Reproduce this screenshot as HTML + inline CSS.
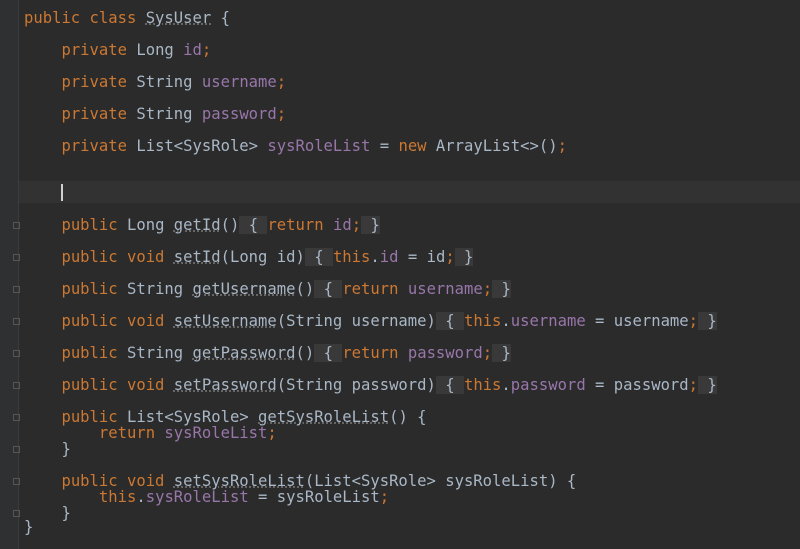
<!DOCTYPE html>
<html><head><style>
body{margin:0;width:800px;height:549px;background:#2b2b2b;overflow:hidden;position:relative;font-family:"DejaVu Sans Mono","Liberation Mono",monospace;font-size:15.55px;color:#a9b7c6}
.g{position:absolute;left:0;top:0;width:18px;height:549px;background:#2f3032;border-right:1px solid #3a3d3f}
.l{position:absolute;left:24px;height:20px;line-height:20px;white-space:pre}
.k{color:#cc7832}.f{color:#9876aa}.u{text-decoration:underline dotted #777}
.fb{background:#393939}
.cur{position:absolute;left:19px;right:0;top:181px;height:22px;background:#323232}
.caret{position:absolute;left:61px;top:184px;width:2px;height:17px;background:#cfcfcf}
.fm{position:absolute;left:13px;width:7px;height:7px;border:1px solid #555;box-sizing:border-box}
</style></head><body>
<div class="g"></div>
<div class="cur"></div><div class="caret"></div>
<div class="fm" style="top:222px"></div><div class="fm" style="top:254px"></div><div class="fm" style="top:286px"></div><div class="fm" style="top:318px"></div><div class="fm" style="top:350px"></div><div class="fm" style="top:382px"></div><div class="fm" style="top:414px"></div><div class="fm" style="top:446px"></div><div class="fm" style="top:478px"></div><div class="fm" style="top:510px"></div>
<div class="l" style="top:8px"><span class="k">public class </span><span class="u">SysUser</span> {</div>
<div class="l" style="top:40px">    <span class="k">private </span>Long <span class="f">id</span><span class="k">;</span></div>
<div class="l" style="top:72px">    <span class="k">private </span>String <span class="f">username</span><span class="k">;</span></div>
<div class="l" style="top:104px">    <span class="k">private </span>String <span class="f">password</span><span class="k">;</span></div>
<div class="l" style="top:136px">    <span class="k">private </span>List&lt;SysRole&gt; <span class="f">sysRoleList</span> = <span class="k">new </span>ArrayList&lt;&gt;()<span class="k">;</span></div>
<div class="l" style="top:215px">    <span class="k">public </span>Long <span class="u">getId</span>()<span class="fb"> { </span><span class="k">return </span><span class="f">id</span><span class="k">;</span><span class="fb"> }</span></div>
<div class="l" style="top:247px">    <span class="k">public void </span><span class="u">setId</span>(Long id)<span class="fb"> { </span><span class="k">this</span>.<span class="f">id</span> = id<span class="k">;</span><span class="fb"> }</span></div>
<div class="l" style="top:279px">    <span class="k">public </span>String <span class="u">getUsername</span>()<span class="fb"> { </span><span class="k">return </span><span class="f">username</span><span class="k">;</span><span class="fb"> }</span></div>
<div class="l" style="top:311px">    <span class="k">public void </span><span class="u">setUsername</span>(String username)<span class="fb"> { </span><span class="k">this</span>.<span class="f">username</span> = username<span class="k">;</span><span class="fb"> }</span></div>
<div class="l" style="top:343px">    <span class="k">public </span>String <span class="u">getPassword</span>()<span class="fb"> { </span><span class="k">return </span><span class="f">password</span><span class="k">;</span><span class="fb"> }</span></div>
<div class="l" style="top:375px">    <span class="k">public void </span><span class="u">setPassword</span>(String password)<span class="fb"> { </span><span class="k">this</span>.<span class="f">password</span> = password<span class="k">;</span><span class="fb"> }</span></div>
<div class="l" style="top:407px">    <span class="k">public </span>List&lt;SysRole&gt; <span class="u">getSysRoleList</span>() {</div>
<div class="l" style="top:423px">        <span class="k">return </span><span class="f">sysRoleList</span><span class="k">;</span></div>
<div class="l" style="top:439px">    }</div>
<div class="l" style="top:471px">    <span class="k">public void </span><span class="u">setSysRoleList</span>(List&lt;SysRole&gt; sysRoleList) {</div>
<div class="l" style="top:487px">        <span class="k">this</span>.<span class="f">sysRoleList</span> = sysRoleList<span class="k">;</span></div>
<div class="l" style="top:503px">    }</div>
<div class="l" style="top:517px">}</div>
</body></html>
